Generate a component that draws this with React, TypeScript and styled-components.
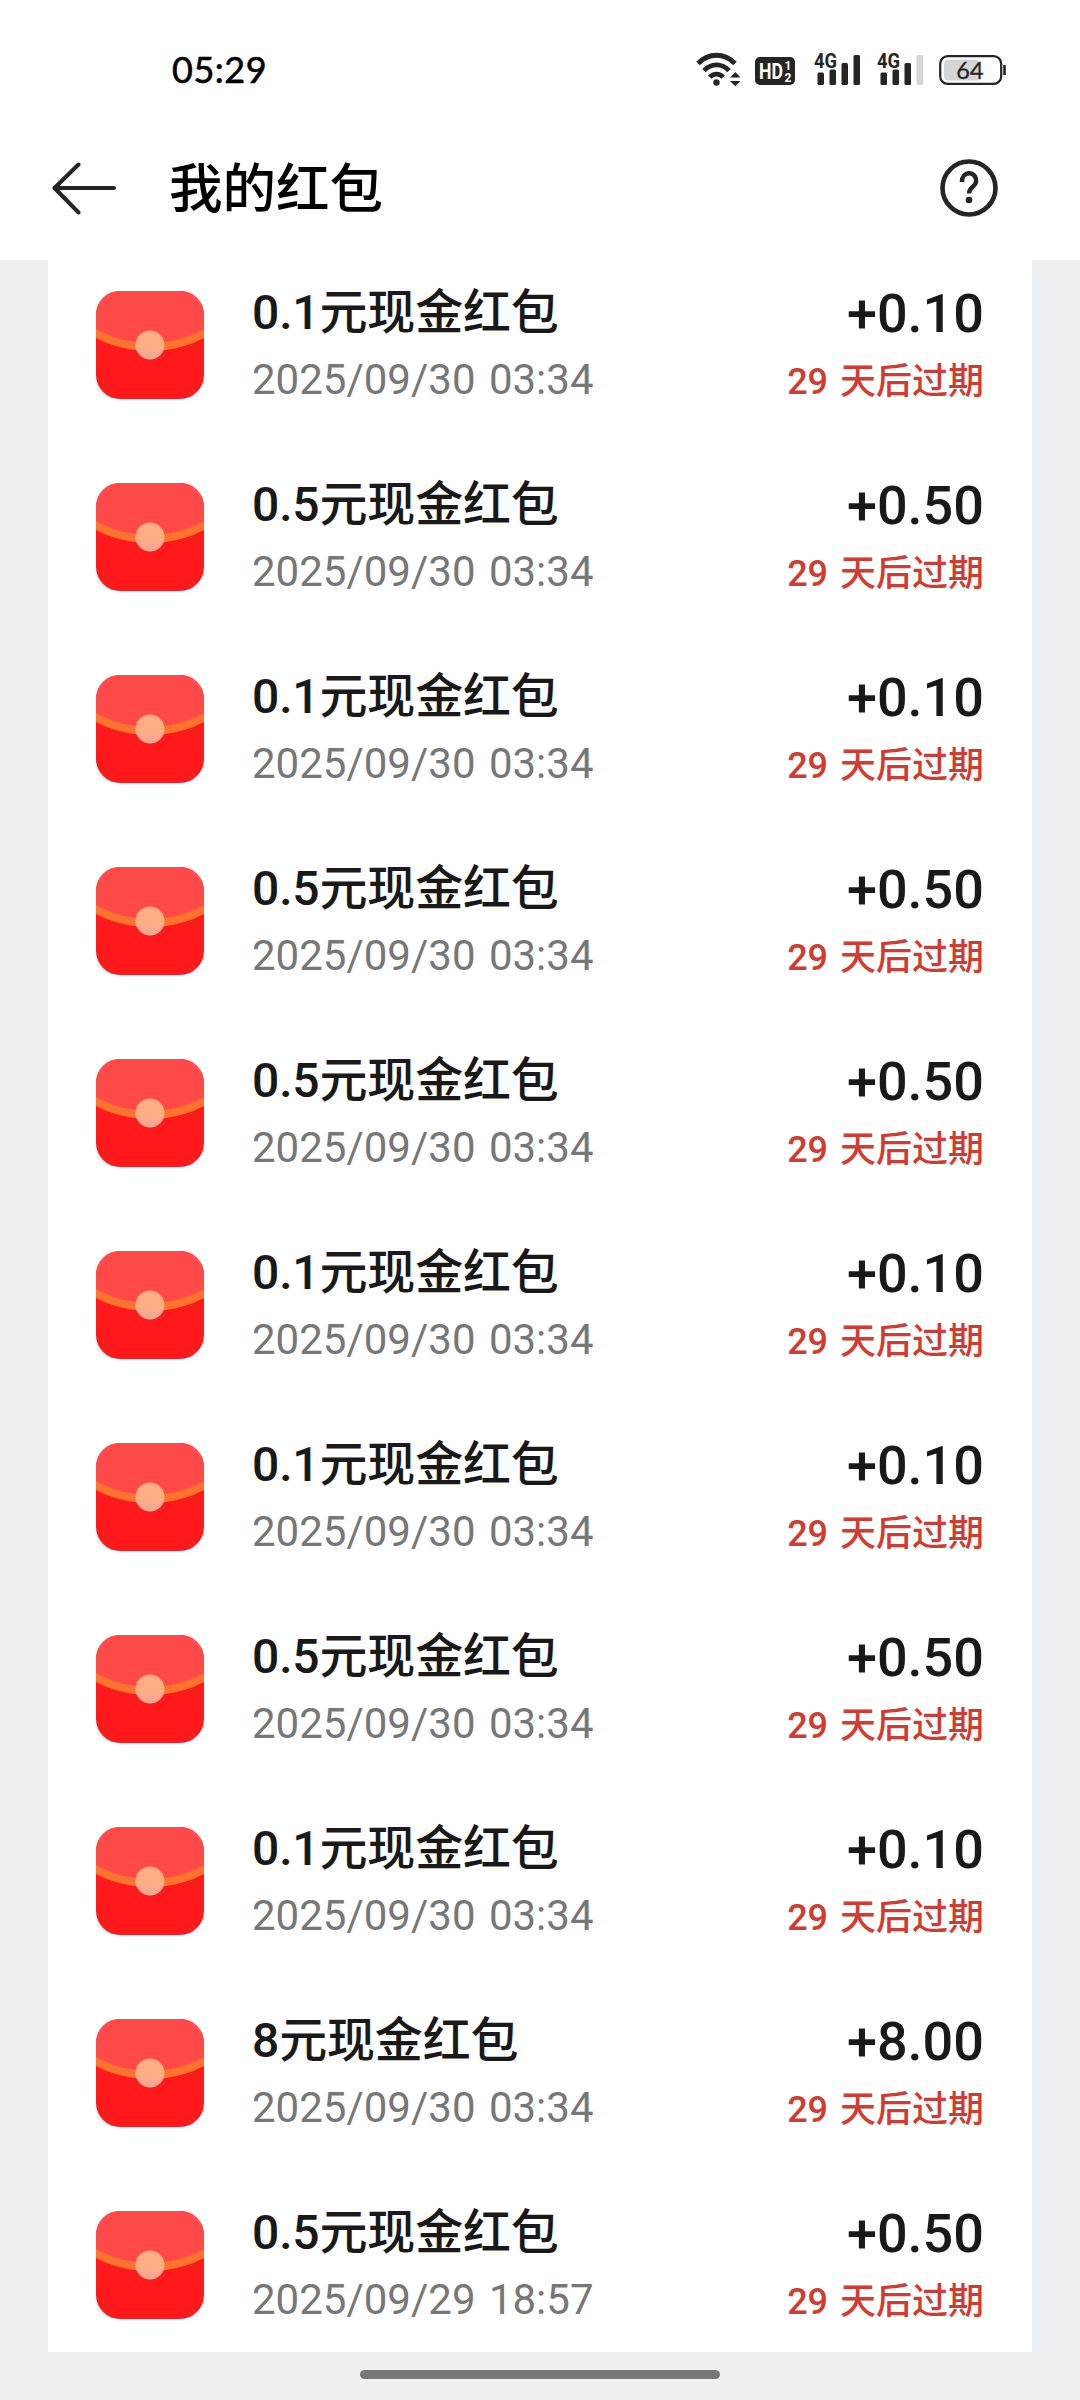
import React from "react";
import styled, { createGlobalStyle } from "styled-components";

const GlobalStyle = createGlobalStyle`
  * { box-sizing: border-box; }
  body { margin: 0; background: #eff0f2; }
`;

const Screen = styled.div`
  width: 1080px;
  height: 2400px;
  display: flex;
  flex-direction: column;
  background: #eff0f2;
  font-family: Roboto, "Noto Sans CJK SC", sans-serif;
  overflow: hidden;
`;

const Top = styled.header`
  height: 260px;
  flex: none;
  background: #fefefe;
`;

const StatusBar = styled.div`
  height: 120px;
  padding: 18px 74px 0 172px;
  display: flex;
  align-items: center;
  justify-content: space-between;
`;

const Clock = styled.span`
  font: 400 36px/40px Lato, sans-serif;
  letter-spacing: 0.5px;
  color: #000;
  -webkit-text-stroke: 0.6px #000;
`;

const TitleBar = styled.div`
  height: 140px;
  padding: 0 82px 4px 51px;
  display: flex;
  align-items: center;
`;

const PageTitle = styled.h1`
  flex: 1;
  margin: 3px 0 0 52px;
  font-size: 53.5px;
  line-height: 72px;
  font-weight: 500;
  color: #000;
`;

const Viewport = styled.main`
  height: 2092px;
  margin: 0 48px;
  flex: none;
  background: #fff;
  overflow: hidden;
`;

const List = styled.ul`
  list-style: none;
  margin: -11px 0 0;
  padding: 0;
`;

const Row = styled.li`
  height: 192px;
  padding: 0 48px;
  display: flex;
  align-items: center;
`;

const Details = styled.div`
  flex: 1;
  margin-left: 48px;
  display: flex;
  flex-direction: column;
`;

const Name = styled.span`
  font-size: 48px;
  line-height: 68px;
  font-weight: 500;
  letter-spacing: -0.15px;
  color: #191919;
`;

const DateText = styled.span`
  font-size: 42px;
  line-height: 64px;
  padding-top: 1px;
  margin-bottom: -1px;
  word-spacing: 3px;
  color: #777;
`;

const Value = styled.div`
  display: flex;
  flex-direction: column;
  align-items: flex-end;
  padding-top: 5px;
`;

const Amount = styled.span`
  font-size: 54px;
  line-height: 68px;
  font-weight: 500;
  color: #191919;
`;

const Expiry = styled.span`
  font-size: 36px;
  line-height: 68px;
  font-weight: 500;
  word-spacing: 3px;
  color: #d13c32;
`;

const GestureArea = styled.footer`
  flex: 1;
  display: flex;
  justify-content: center;
  padding-top: 18px;
`;

const GestureBar = styled.div`
  width: 360px;
  height: 9px;
  border-radius: 5px;
  background: #777;
`;

const ink = "#252525";

const StatusIcons = () => (
  <svg width="312" height="40" viewBox="694 48 312 40" fill="none" aria-hidden="true">
    <g stroke={ink} strokeWidth="4.800">
      <path d="M698 62.500C708.500 51.500 724.500 51.500 735 62.500" />
      <path d="M704 69.700C711 62 722 62 729 69.700" />
      <path d="M709.800 76.300C713.500 72 719.500 72 723.200 76.300" />
    </g>
    <circle cx="716.500" cy="81.500" r="3.200" fill={ink} />
    <path d="M730 76.500L735.300 71L740.500 76.500ZM730 80L735.300 85.200L740.500 80Z" fill={ink} />
    <rect x="755" y="56" width="40" height="28" rx="5" fill={ink} />
    <g fill="#fff" fontFamily="Roboto, sans-serif" fontWeight="700">
      <text x="759" y="78" fontSize="22" textLength="24" lengthAdjust="spacingAndGlyphs">HD</text>
      <text x="784.500" y="69" fontSize="12">1</text>
      <text x="784.500" y="81" fontSize="12">2</text>
    </g>
    <g fill={ink} fontFamily="Roboto, sans-serif" fontWeight="700" fontSize="19.500">
      <text x="814" y="66.500" textLength="23" lengthAdjust="spacingAndGlyphs">4G</text>
      <text x="877" y="66.500" textLength="23" lengthAdjust="spacingAndGlyphs">4G</text>
    </g>
    <g fill={ink}>
      <rect x="817.500" y="71.500" width="6.500" height="12.500" rx="1.500" />
      <rect x="829.500" y="68.500" width="6.500" height="15.500" rx="1.500" />
      <rect x="841.500" y="62" width="6.500" height="22" rx="1.500" />
      <rect x="853.500" y="54" width="6.500" height="30" rx="1.500" />
      <rect x="880.500" y="71.500" width="6.500" height="12.500" rx="1.500" />
      <rect x="892.500" y="68.500" width="6.500" height="15.500" rx="1.500" />
      <rect x="904.500" y="62" width="6.500" height="22" rx="1.500" />
      <rect x="916.500" y="54" width="6.500" height="30" rx="1.500" fill="#d5d5d5" />
    </g>
    <path d="M978 58.500V79.500H949Q944 79.500 944 74.500V63.500Q944 58.500 949 58.500Z" fill="#d5d5d5" />
    <rect x="940.200" y="55.200" width="61" height="27.600" rx="7.500" stroke={ink} strokeWidth="2.200" />
    <path d="M1004.500 64V74" stroke={ink} strokeWidth="2.600" />
    <text x="970" y="77.500" textAnchor="middle" fontFamily="Lato, sans-serif" fontSize="23.500" fill={ink} stroke={ink} strokeWidth="0.300">64</text>
  </svg>
);

const BackIcon = () => (
  <svg width="66" height="54" viewBox="0 0 66 54" fill="none" stroke={ink} strokeWidth="4" strokeLinecap="round">
    <path d="M27.500 3.500L3.500 27L27.500 51.500" strokeLinejoin="round" />
    <path d="M4 27H63" />
  </svg>
);

const HelpIcon = () => (
  <svg width="58" height="58" viewBox="0 0 58 58" fill="none" stroke={ink}>
    <circle cx="29" cy="29" r="26.500" strokeWidth="4.600" />
    <path d="M21.900 23C21.900 11.500 36.100 11.500 36.100 22C36.100 28 29 27.500 29 34.500" strokeWidth="4.400" />
    <circle cx="29" cy="41" r="3.300" fill={ink} stroke="none" />
  </svg>
);

const EnvelopeSvg = styled.svg`
  width: 108px;
  height: 108px;
  border-radius: 24px;
  flex: none;
`;

const Envelope = () => (
  <EnvelopeSvg viewBox="0 0 108 108">
    <defs>
      <linearGradient id="seal" x1="0.600" y1="0" x2="0.400" y2="1">
        <stop offset="0" stopColor="#fdae86" />
        <stop offset="0.500" stopColor="#fbaf84" />
        <stop offset="1" stopColor="#f9a39a" />
      </linearGradient>
    </defs>
    <rect width="108" height="108" fill="#fe191b" />
    <circle cx="54" cy="-59" r="115" fill="#ff4a48" stroke="#fe742e" strokeWidth="8" />
    <circle cx="54" cy="54" r="14.500" fill="url(#seal)" />
  </EnvelopeSvg>
);

const packets = [
  { value: "0.1", amount: "+0.10", date: "2025/09/30 03:34" },
  { value: "0.5", amount: "+0.50", date: "2025/09/30 03:34" },
  { value: "0.1", amount: "+0.10", date: "2025/09/30 03:34" },
  { value: "0.5", amount: "+0.50", date: "2025/09/30 03:34" },
  { value: "0.5", amount: "+0.50", date: "2025/09/30 03:34" },
  { value: "0.1", amount: "+0.10", date: "2025/09/30 03:34" },
  { value: "0.1", amount: "+0.10", date: "2025/09/30 03:34" },
  { value: "0.5", amount: "+0.50", date: "2025/09/30 03:34" },
  { value: "0.1", amount: "+0.10", date: "2025/09/30 03:34" },
  { value: "8", amount: "+8.00", date: "2025/09/30 03:34" },
  { value: "0.5", amount: "+0.50", date: "2025/09/29 18:57" },
];

export default function App() {
  return (
    <Screen>
      <GlobalStyle />
      <Top>
        <StatusBar>
          <Clock>05:29</Clock>
          <StatusIcons />
        </StatusBar>
        <TitleBar>
          <BackIcon />
          <PageTitle>我的红包</PageTitle>
          <HelpIcon />
        </TitleBar>
      </Top>
      <Viewport>
        <List>
          {packets.map((p, i) => (
            <Row key={i}>
              <Envelope />
              <Details>
                <Name>{p.value}元现金红包</Name>
                <DateText>{p.date}</DateText>
              </Details>
              <Value>
                <Amount>{p.amount}</Amount>
                <Expiry>29 天后过期</Expiry>
              </Value>
            </Row>
          ))}
        </List>
      </Viewport>
      <GestureArea>
        <GestureBar />
      </GestureArea>
    </Screen>
  );
}
